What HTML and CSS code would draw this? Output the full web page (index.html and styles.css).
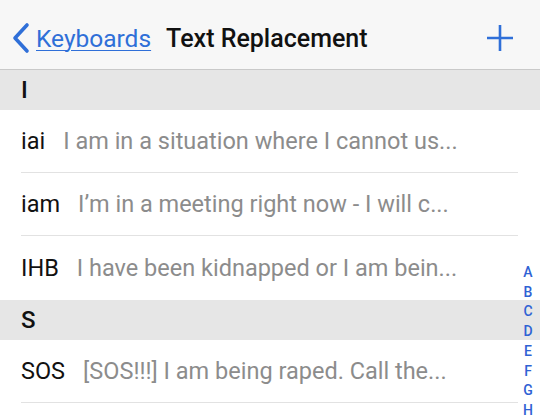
FILE: index.html
```html
<!DOCTYPE html>
<html lang="en">
<head>
    <meta charset="UTF-8">
    <meta name="viewport" content="width=device-width, initial-scale=1.0">
    <title>Text Replacement</title>
    <link rel="stylesheet" href="styles.css">
</head>
<body>
    <div class="screen">
        <div class="navbar">
            <a class="back" href="#">
                <svg class="chevron" width="22" height="32" viewBox="0 0 22 32">
                    <path d="M17 3 L5 16 L17 29" fill="none" stroke="#2f6fd8" stroke-width="3.6" stroke-linecap="round" stroke-linejoin="round"/>
                </svg>
                <span class="back-label">Keyboards</span>
            </a>
            <div class="title">Text Replacement</div>
            <svg class="plus" width="28" height="28" viewBox="0 0 28 28">
                <path d="M14 1 V27 M1 14 H27" fill="none" stroke="#2f6fd8" stroke-width="2.6"/>
            </svg>
        </div>

        <div class="section-header">I</div>
        <div class="row"><div class="row-body"><span class="shortcut">iai</span><span class="phrase">I am in a situation where I cannot us...</span></div></div>
        <div class="row"><div class="row-body"><span class="shortcut">iam</span><span class="phrase">I’m in a meeting right now - I will c...</span></div></div>
        <div class="row last"><div class="row-body"><span class="shortcut">IHB</span><span class="phrase">I have been kidnapped or I am bein...</span></div></div>

        <div class="section-header">S</div>
        <div class="row"><div class="row-body"><span class="shortcut">SOS</span><span class="phrase">[SOS!!!] I am being raped. Call the...</span></div></div>

        <div class="index">
            <span>A</span><span>B</span><span>C</span><span>D</span><span>E</span><span>F</span><span>G</span><span>H</span>
        </div>
    </div>
</body>
</html>
```

FILE: styles.css
```css
body {
    margin: 0;
    background: #ffffff;
    font-family: Roboto, "Liberation Sans", sans-serif;
    color: #111111;
}
.screen {
    position: relative;
    width: 540px;
    height: 419px;
    overflow: hidden;
}
.navbar {
    height: 70px;
    box-sizing: border-box;
    padding: 7px 26px 0 10px;
    background-color: #f7f7f7;
    border-bottom: 1px solid #c9c9c9;
    display: flex;
    align-items: center;
}
.back {
    display: flex;
    align-items: center;
    text-decoration: none;
    color: #2f6fd8;
}
.chevron {
    margin-right: 4px;
}
.back-label {
    font-size: 24.5px;
    text-decoration: underline;
    text-decoration-thickness: 1px;
    text-underline-offset: 3px;
}
.title {
    margin-left: 15px;
    font-size: 25px;
    font-weight: 500;
    flex: 1;
}
.section-header {
    height: 40px;
    background-color: #e6e6e6;
    padding-left: 21px;
    display: flex;
    align-items: center;
    font-size: 24px;
    font-weight: 500;
}
.row {
    padding-left: 21px;
}
.row-body {
    height: 62px;
    margin-right: 22px;
    border-bottom: 1px solid #e2e2e2;
    display: flex;
    align-items: center;
    font-size: 23.5px;
    white-space: nowrap;
}
.row.last .row-body {
    border-bottom: none;
    height: 64px;
}
.shortcut {
    margin-right: 18px;
}
.phrase {
    color: #8c8c8c;
}
.index {
    position: absolute;
    right: 5px;
    top: 263px;
    width: 14px;
    display: flex;
    flex-direction: column;
    align-items: center;
    font-size: 14px;
    font-weight: 500;
    line-height: 19.7px;
    color: #2f62d4;
}
```
